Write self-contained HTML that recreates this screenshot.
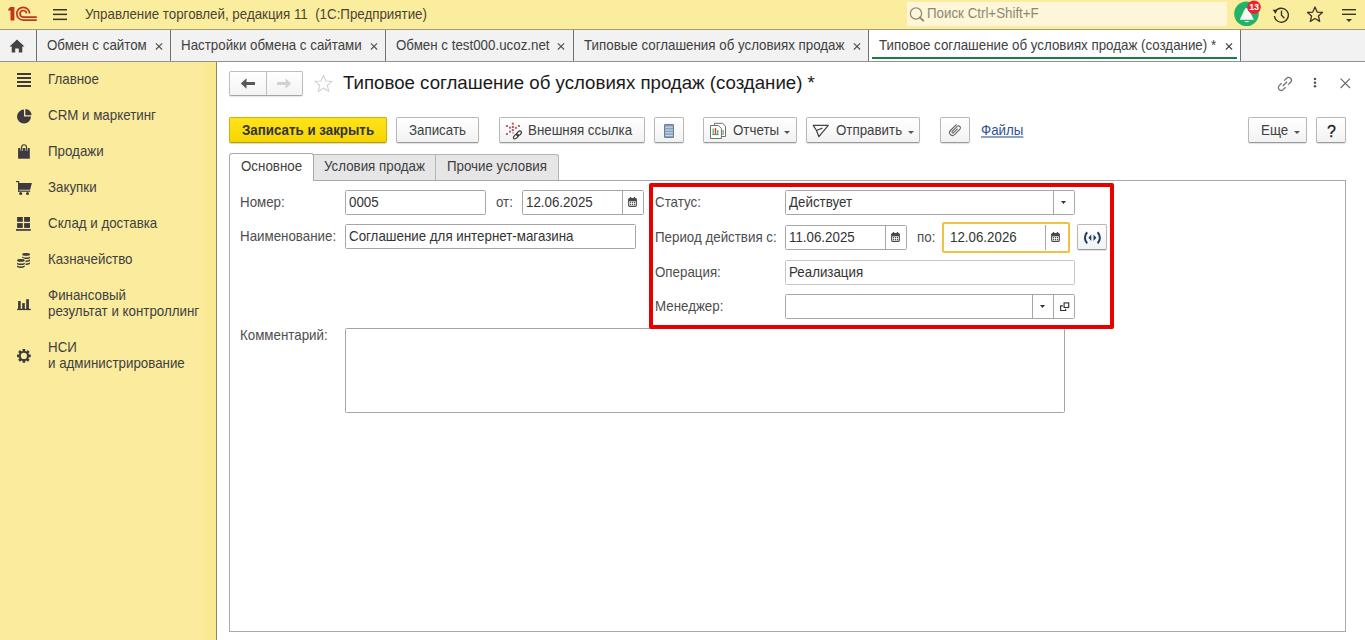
<!DOCTYPE html>
<html><head><meta charset="utf-8">
<style>
*{box-sizing:border-box;margin:0;padding:0}
html,body{width:1365px;height:640px;overflow:hidden;background:#fff;font-family:"Liberation Sans",sans-serif;font-size:13.33px;color:#4d4d4d}
.a{position:absolute}
.t{position:absolute;white-space:pre;line-height:15px;font-size:13.33px;transform:scaleY(1.08);transform-origin:0 7.4px}
svg{position:absolute;overflow:visible}
#hdr{position:absolute;left:0;top:0;width:1365px;height:29px;background:#fbed9e}
#tabs{position:absolute;left:0;top:29px;width:1365px;height:33px;background:#f2f2f2;border-top:1px solid #a29c7c;border-bottom:1px solid #939393}
.tab{position:absolute;top:0;height:31px;border-left:1px solid #707070}
#side{position:absolute;left:0;top:62px;width:217px;height:578px;background:linear-gradient(to right,#faeb9d 0,#faeb9d 198px,#fbe990 212px,#fbe98e 216px);border-right:1px solid #8d8866}
.si{position:absolute;left:48px;color:#404040;font-size:13.33px;line-height:14.8px;white-space:nowrap;transform:scaleY(1.08);transform-origin:0 7.3px;margin-top:2px}
.btn{position:absolute;top:117px;height:26px;border:1px solid #b8b8b8;border-bottom-color:#9a9a9a;border-radius:2px;background:linear-gradient(#fff,#f2f2f2);box-shadow:0 1px 1px rgba(0,0,0,.12)}
.inp{position:absolute;height:25px;border:1px solid #a6a6a6;border-radius:1.5px;background:#fff}
.lbl{position:absolute;white-space:pre;line-height:15px;color:#4d4d4d;transform:scaleY(1.08);transform-origin:0 7.4px}
.val{position:absolute;white-space:pre;line-height:15px;color:#333;transform:scaleY(1.08);transform-origin:0 7.4px}
.sep{position:absolute;top:0;bottom:0;width:1px;background:#a6a6a6}
</style></head>
<body>
<!-- header -->
<div id="hdr">
  <svg style="left:0;top:0" width="40" height="29" viewBox="0 0 40 29">
    <g fill="none" stroke="#c4361c" stroke-width="1.7">
      <path d="M29.6 13.6 A6.4 6.4 0 1 0 23.2 20.1 H36.8"/>
      <path d="M26.6 13.4 A3.3 3.3 0 1 0 23.2 17.1 H36.8"/>
    </g>
    <path d="M8.2 9.2 L10.3 7.1 H14.4 V20.6 H10.5 V10.6 H8.2 Z" fill="#c4361c"/>
  </svg>
  <svg style="left:53px;top:8px" width="15" height="13">
    <g fill="#3b3523"><rect x="0" y="1" width="14" height="1.5"/><rect x="0" y="5.6" width="14" height="1.5"/><rect x="0" y="10.6" width="14" height="1.5"/></g>
  </svg>
  <div class="t" style="left:85px;top:7px;color:#4a4433">Управление торговлей, редакция 11  (1С:Предприятие)</div>
  <div class="a" style="left:907px;top:2px;width:320px;height:24px;background:#fdf6d8"></div>
  <svg style="left:907px;top:4px" width="20" height="20">
    <circle cx="9" cy="9.5" r="5.6" fill="none" stroke="#8f8a70" stroke-width="1.3"/>
    <path d="M13 13.5 L16.2 16.6" stroke="#8f8a70" stroke-width="2" stroke-linecap="round"/>
  </svg>
  <div class="t" style="left:927px;top:6px;color:#8d8970">Поиск Ctrl+Shift+F</div>
  <!-- bell -->
  <svg style="left:1234px;top:1px" width="26" height="26">
    <circle cx="12.5" cy="12.8" r="12.3" fill="#21b36a"/>
    <path d="M5.8 18.8 L10 9.5 Q12.6 4.6 15.2 9.5 L19.9 18.8 Z" fill="#f4fbf6"/>
    <path d="M10.4 19.9 H15.2 Q12.8 22.4 10.4 19.9 Z" fill="#f4fbf6"/>
  </svg>
  <svg style="left:1245px;top:-1px" width="18" height="16">
    <circle cx="9" cy="8.2" r="6.8" fill="#e8232f"/>
  </svg>
  <div class="a" style="left:1245px;top:1px;width:18px;text-align:center;font-size:9px;font-weight:bold;color:#fff;line-height:12px;letter-spacing:-0.2px">13</div>
  <!-- history -->
  <svg style="left:1272px;top:6px" width="18" height="17">
    <path d="M3.4 5.5 A7 7 0 1 1 2.4 10" fill="none" stroke="#3b3523" stroke-width="1.4"/>
    <path d="M0.6 3.8 L5.4 3.5 L3.6 8 Z" fill="#3b3523"/>
    <path d="M9.5 4.5 V9.2 L12.4 12.3" fill="none" stroke="#3b3523" stroke-width="1.4"/>
  </svg>
  <!-- star -->
  <svg style="left:1306px;top:6px" width="18" height="17">
    <path d="M9 1 L11.2 6.1 L16.5 6.5 L12.4 10 L13.7 15.4 L9 12.5 L4.3 15.4 L5.6 10 L1.5 6.5 L6.8 6.1 Z" fill="none" stroke="#3b3523" stroke-width="1.3" stroke-linejoin="round"/>
  </svg>
  <!-- menu -->
  <svg style="left:1342px;top:8px" width="16" height="16">
    <rect x="0" y="1" width="14" height="1.4" fill="#3b3523"/>
    <rect x="0" y="5.6" width="14" height="1.4" fill="#3b3523"/>
    <path d="M4 11 H10 L7 14 Z" fill="#3b3523"/>
  </svg>
</div>

<!-- open windows tabs -->
<div id="tabs">
  <svg style="left:9px;top:9px" width="16" height="14">
    <path d="M8 0.5 L15.5 7.5 H13.3 V13.5 H9.8 V9.5 H6.2 V13.5 H2.7 V7.5 H0.5 Z" fill="#444"/>
  </svg>
  <div class="tab" style="left:36px;width:134px">
    <div class="t" style="left:10px;top:8px;color:#404040">Обмен с сайтом</div>
    <svg style="left:118px;top:13px" width="8" height="8"><path d="M0.9 0.3 L7.1 6.5 M7.1 0.3 L0.9 6.5" stroke="#555" stroke-width="1.15"/></svg>
  </div>
  <div class="tab" style="left:170px;width:215px">
    <div class="t" style="left:10px;top:8px;color:#404040">Настройки обмена с сайтами</div>
    <svg style="left:199px;top:13px" width="8" height="8"><path d="M0.9 0.3 L7.1 6.5 M7.1 0.3 L0.9 6.5" stroke="#555" stroke-width="1.15"/></svg>
  </div>
  <div class="tab" style="left:385px;width:188px">
    <div class="t" style="left:10px;top:8px;color:#404040">Обмен с test000.ucoz.net</div>
    <svg style="left:171px;top:13px" width="8" height="8"><path d="M0.9 0.3 L7.1 6.5 M7.1 0.3 L0.9 6.5" stroke="#555" stroke-width="1.15"/></svg>
  </div>
  <div class="tab" style="left:573px;width:295px">
    <div class="t" style="left:10px;top:8px;color:#404040">Типовые соглашения об условиях продаж</div>
    <svg style="left:279px;top:13px" width="8" height="8"><path d="M0.9 0.3 L7.1 6.5 M7.1 0.3 L0.9 6.5" stroke="#555" stroke-width="1.15"/></svg>
  </div>
  <div class="tab" style="left:868px;width:372px;background:#fff">
    <div class="t" style="left:10px;top:8px;color:#404040">Типовое соглашение об условиях продаж (создание) *</div>
    <svg style="left:356px;top:13px" width="8" height="8"><path d="M0.9 0.3 L7.1 6.5 M7.1 0.3 L0.9 6.5" stroke="#444" stroke-width="1.15"/></svg>
    <div class="a" style="left:3px;top:27px;width:365px;height:2px;background:#1e7c48"></div>
  </div>
  <div class="tab" style="left:1240px;width:1px"></div>
</div>

<!-- sidebar -->
<div id="side">
  <svg style="left:17px;top:11px" width="14" height="14"><g fill="#3c3940"><rect y="0" width="14" height="2"/><rect y="4" width="14" height="2"/><rect y="8" width="14" height="2"/><rect y="12" width="14" height="2"/></g></svg>
  <div class="si" style="top:9px">Главное</div>
  <svg style="left:17px;top:46px" width="15" height="15">
    <path d="M7 8.6 V1.6 A7 7 0 1 0 14 8.6 Z" fill="#3c3940"/>
    <path d="M8.3 7.2 V1 A6.2 6.2 0 0 1 14.5 7.2 Z" fill="#3c3940"/>
  </svg>
  <div class="si" style="top:45px">CRM и маркетинг</div>
  <svg style="left:17px;top:81px" width="14" height="17">
    <path d="M1.1 5.1 H12.8 V15.7 H1.1 Z" fill="#3c3940"/>
    <rect x="3.5" y="5" width="2.3" height="2.8" fill="#faeb9d"/><rect x="8.3" y="5" width="2.3" height="2.8" fill="#faeb9d"/>
    <path d="M4.65 7.8 V4.1 A2.4 2.4 0 0 1 9.45 4.1 V7.8" fill="none" stroke="#3c3940" stroke-width="1.15"/>
  </svg>
  <div class="si" style="top:81px">Продажи</div>
  <svg style="left:16px;top:119px" width="17" height="16">
    <g fill="#3c3940">
      <rect x="0" y="0" width="2.9" height="1.2"/>
      <rect x="2.1" y="0" width="1.1" height="10.6"/>
      <path d="M2.1 2 H15.9 L14.1 8.7 H2.1 Z"/>
      <rect x="2.1" y="9.6" width="12.1" height="1.2"/>
      <circle cx="4.7" cy="12.4" r="1.5"/><circle cx="11.5" cy="12.4" r="1.5"/>
    </g>
  </svg>
  <div class="si" style="top:117px">Закупки</div>
  <svg style="left:16px;top:155px" width="16" height="15">
    <g fill="#3c3940"><rect x="1.1" y="0" width="5.7" height="4.8"/><rect x="8.1" y="0" width="5.9" height="4.8"/><rect x="1.1" y="6.1" width="5.7" height="4.8"/><rect x="8.1" y="6.1" width="5.9" height="4.8"/><rect x="0" y="12.1" width="14.8" height="1.7"/></g>
  </svg>
  <div class="si" style="top:153px">Склад и доставка</div>
  <svg style="left:16px;top:189px" width="16" height="18">
    <ellipse cx="10.1" cy="3.4" rx="3.9" ry="1.4" fill="#3c3940"/><path d="M6.199999999999999 5.20 A3.9 1.4 0 0 0 14.0 5.20 V6.70 A3.9 1.4 0 0 1 6.199999999999999 6.70 Z" fill="#3c3940"/><path d="M6.199999999999999 8.10 A3.9 1.4 0 0 0 14.0 8.10 V9.60 A3.9 1.4 0 0 1 6.199999999999999 9.60 Z" fill="#3c3940"/><path d="M6.199999999999999 11.00 A3.9 1.4 0 0 0 14.0 11.00 V12.50 A3.9 1.4 0 0 1 6.199999999999999 12.50 Z" fill="#3c3940"/>
    <path d="M0.3 9.3 A4.6 2.2 0 0 1 9.5 9.3 V16.6 H0.3 Z" fill="#faeb9d"/>
    <ellipse cx="4.9" cy="9.4" rx="3.8" ry="1.4" fill="#3c3940"/><path d="M1.1000000000000005 11.20 A3.8 1.4 0 0 0 8.7 11.20 V12.70 A3.8 1.4 0 0 1 1.1000000000000005 12.70 Z" fill="#3c3940"/><path d="M1.1000000000000005 14.10 A3.8 1.4 0 0 0 8.7 14.10 V15.60 A3.8 1.4 0 0 1 1.1000000000000005 15.60 Z" fill="#3c3940"/>
  </svg>
  <div class="si" style="top:189px">Казначейство</div>
  <svg style="left:17px;top:237px" width="15" height="13">
    <g fill="#3c3940"><rect x="1.1" y="2" width="2.6" height="8.5"/><rect x="5.2" y="4.1" width="2.6" height="6.4"/><rect x="9.2" y="0.2" width="2.7" height="10.3"/><rect x="0.1" y="9.8" width="13.7" height="1.3"/></g>
  </svg>
  <div class="si" style="top:225px">Финансовый<br>результат и контроллинг</div>
  <svg style="left:17px;top:287px" width="14" height="14">
    <path fill="#3c3940" fill-rule="evenodd" transform="translate(6.9 6.9)" d="M-1.35 -5.02 L-1.34 -6.87 L1.34 -6.87 L1.35 -5.02 L2.60 -4.50 L3.91 -5.80 L5.80 -3.91 L4.50 -2.60 L5.02 -1.35 L6.87 -1.34 L6.87 1.34 L5.02 1.35 L4.50 2.60 L5.80 3.91 L3.91 5.80 L2.60 4.50 L1.35 5.02 L1.34 6.87 L-1.34 6.87 L-1.35 5.02 L-2.60 4.50 L-3.91 5.80 L-5.80 3.91 L-4.50 2.60 L-5.02 1.35 L-6.87 1.34 L-6.87 -1.34 L-5.02 -1.35 L-4.50 -2.60 L-5.80 -3.91 L-3.91 -5.80 L-2.60 -4.50 Z M0 -3.1 A3.1 3.1 0 1 0 0 3.1 A3.1 3.1 0 1 0 0 -3.1 Z"/>
  </svg>
  <div class="si" style="top:277px">НСИ<br>и администрирование</div>
</div>

<!-- content -->
<div id="content">
  <!-- nav buttons -->
  <div class="a" style="left:229px;top:71px;width:74px;height:25px;border:1px solid #bdbdbd;border-bottom-color:#a5a5a5;border-radius:2px;background:linear-gradient(#fff,#f3f3f3);box-shadow:0 1px 1px rgba(0,0,0,.1)"></div>
  <div class="a" style="left:266px;top:72px;width:1px;height:23px;background:#bdbdbd"></div>
  <svg style="left:240px;top:78px" width="16" height="12"><path d="M0.8 5.5 L6.5 0.3 V4 H15 V7 H6.5 V10.7 Z" fill="#585858"/></svg>
  <svg style="left:276px;top:78px" width="16" height="12"><path d="M15.2 5.5 L9.5 0.3 V4 H1 V7 H9.5 V10.7 Z" fill="#d2d2d2"/></svg>
  <svg style="left:314px;top:74px" width="20" height="20"><path d="M9.5 1.2 L11.9 7 L18 7.4 L13.3 11.3 L14.8 17.4 L9.5 14.1 L4.2 17.4 L5.7 11.3 L1 7.4 L7.1 7 Z" fill="none" stroke="#d4d4d4" stroke-width="1.2" stroke-linejoin="round"/></svg>
  <div class="a" style="left:343px;top:72px;font-size:18.67px;line-height:21px;color:#1a1a1a;white-space:pre">Типовое соглашение об условиях продаж (создание) *</div>
  <!-- top right icons -->
  <svg style="left:1276.6px;top:75.6px" width="17" height="17">
    <g fill="none" stroke="#747474" stroke-width="1.3">
      <path d="M7.2 4.6 L9.6 2.2 A2.6 2.6 0 0 1 13.6 6.2 L11.2 8.6"/>
      <path d="M8.6 11.2 L6.2 13.6 A2.6 2.6 0 0 1 2.2 9.6 L4.6 7.2"/>
      <path d="M5.8 10 L10 5.8"/>
    </g>
  </svg>
  <svg style="left:1313px;top:77px" width="4" height="12"><g fill="#555"><circle cx="2" cy="2.1" r="1.25"/><circle cx="2" cy="5.7" r="1.25"/><circle cx="2" cy="9.3" r="1.25"/></g></svg>
  <svg style="left:1340px;top:78px" width="11" height="11"><path d="M0.6 0.6 L10 10 M10 0.6 L0.6 10" stroke="#666" stroke-width="1.1"/></svg>

  <!-- toolbar -->
  <div class="a" style="left:229px;top:117px;width:158px;height:26px;border:1px solid #d4b300;border-bottom-color:#b89c00;border-radius:2px;background:linear-gradient(#ffe41c,#f6d500);box-shadow:0 1px 1px rgba(0,0,0,.15)"></div>
  <div class="t" style="left:242px;top:123px;font-weight:bold;color:#333">Записать и закрыть</div>
  <div class="btn" style="left:396px;width:83px"></div>
  <div class="t" style="left:409px;top:123px;color:#404040">Записать</div>
  <div class="btn" style="left:499px;width:146px"></div>
  <svg style="left:495px;top:115px" width="30" height="30">
    <rect x="10.95" y="10.02" width="2" height="2" fill="#a86a6a"/><rect x="16.82" y="7.67" width="2" height="2" fill="#b05a5a"/><rect x="22.91" y="10.02" width="2" height="2" fill="#a86a6a"/><rect x="14.00" y="11.66" width="2" height="2" fill="#a86a6a"/><rect x="16.82" y="10.95" width="2" height="2" fill="#c04848"/><rect x="19.86" y="11.89" width="2" height="2" fill="#a86a6a"/><rect x="16.82" y="14.00" width="2" height="2" fill="#b05a5a"/><rect x="14.00" y="15.64" width="2" height="2" fill="#a86a6a"/><rect x="10.95" y="17.99" width="2" height="2" fill="#a86a6a"/><rect x="17.05" y="16.82" width="2" height="2" fill="#d8b0a8"/>
    <g fill="none" stroke="#3a3a3a" stroke-width="1.15">
      <ellipse cx="24" cy="18.4" rx="2.9" ry="1.7" transform="rotate(-45 24 18.4)"/>
      <ellipse cx="20.9" cy="21.5" rx="2.9" ry="1.7" transform="rotate(-45 20.9 21.5)"/>
    </g>
  </svg>
  <div class="t" style="left:528px;top:123px;color:#404040">Внешняя ссылка</div>
  <div class="btn" style="left:654px;width:30px"></div>
  <svg style="left:664px;top:124px" width="11" height="15">
    <rect x="0.5" y="0.5" width="9" height="13" rx="0.5" fill="#87a2bd" stroke="#687e97"/>
    <g stroke="#d8e3ee" stroke-width="0.9"><path d="M1.2 3.2 H8.8 M1.2 6 H8.8 M1.2 8.8 H8.8 M1.2 11.4 H8.8"/></g>
  </svg>
  <div class="btn" style="left:703px;width:94px"></div>
  <svg style="left:709px;top:122px" width="18" height="18">
    <path d="M5.5 1.3 H13.6 L16.5 4.2 V14.5 H5.5 Z" fill="#fff" stroke="#6f6f6f" stroke-width="1"/>
    <path d="M1.5 3.5 H9.4 L12.4 6.5 V16.5 H1.5 Z" fill="#fff" stroke="#6f6f6f" stroke-width="1"/>
    <rect x="13.5" y="8" width="1.1" height="5" fill="#4c9a4c"/>
    <rect x="3.6" y="6.5" width="1.1" height="6.5" fill="#4c9a4c"/><rect x="5.8" y="6" width="1.4" height="7" fill="#d6403a"/><rect x="8.2" y="8" width="1.1" height="5" fill="#4c9a4c"/><rect x="3.6" y="12.2" width="6" height="0.9" fill="#4c9a4c"/>
  </svg>
  <div class="t" style="left:733px;top:123px;color:#404040">Отчеты</div>
  <svg style="left:784px;top:131px" width="7" height="4"><path d="M0 0 H6 L3 3 Z" fill="#555"/></svg>
  <div class="btn" style="left:806px;width:114px"></div>
  <svg style="left:806px;top:118px" width="26" height="22">
    <path d="M7.2 7.4 H22.3 L12.9 18.7 L10.5 12.5 Z M10.5 12.5 L16.4 10.2" fill="none" stroke="#444" stroke-width="1.25" stroke-linejoin="round"/>
  </svg>
  <div class="t" style="left:836px;top:123px;color:#404040">Отправить</div>
  <svg style="left:908px;top:131px" width="7" height="4"><path d="M0 0 H6 L3 3 Z" fill="#555"/></svg>
  <div class="btn" style="left:940px;width:30px"></div>
  <svg style="left:938px;top:115px" width="26" height="26">
    <path d="M18.6 9.3 L12.4 15.5 A2.9 2.9 0 0 0 16.5 19.6 L22 14.1 A2 2 0 0 0 19.2 11.3 L14.2 16.3 A1 1 0 0 0 15.6 17.7 L19.6 13.7" fill="none" stroke="#666" stroke-width="1.1"/>
  </svg>
  <div class="t" style="left:981px;top:123px;color:#2f5190;text-decoration:underline">Файлы</div>
  <div class="btn" style="left:1248px;width:59px"></div>
  <div class="t" style="left:1261px;top:123px;color:#404040">Еще</div>
  <svg style="left:1294px;top:131px" width="7" height="4"><path d="M0 0 H6 L3 3 Z" fill="#555"/></svg>
  <div class="btn" style="left:1316px;width:30px"></div>
  <div class="t" style="left:1327px;top:122px;color:#1a1a1a;font-size:16px;line-height:18px;-webkit-text-stroke:0.25px #1a1a1a">?</div>

  <!-- form tabs -->
  <div class="a" style="left:313px;top:154px;width:123px;height:27px;background:#e6e6e6;border:1px solid #b3b3b3;border-bottom:none;border-radius:2px 0 0 0"></div>
  <div class="a" style="left:435px;top:154px;width:124px;height:27px;background:#e6e6e6;border:1px solid #b3b3b3;border-bottom:none;border-radius:0 3px 0 0"></div>
  <div class="t" style="left:324px;top:159px;color:#404040">Условия продаж</div>
  <div class="t" style="left:447px;top:159px;color:#404040">Прочие условия</div>
  <div class="a" style="left:229px;top:180px;width:1117px;height:452px;border:1px solid #a9a9a9;background:#fff"></div>
  <div class="a" style="left:229px;top:153px;width:85px;height:28px;background:#fff;border:1px solid #a9a9a9;border-bottom:none;border-radius:3px 3px 0 0"></div>
  <div class="t" style="left:241px;top:159px;color:#404040">Основное</div>

  <!-- left fields -->
  <div class="lbl" style="left:240px;top:195px">Номер:</div>
  <div class="inp" style="left:345px;top:190px;width:141px"></div>
  <div class="val" style="left:349px;top:195px">0005</div>
  <div class="lbl" style="left:496px;top:195px">от:</div>
  <div class="inp" style="left:522px;top:190px;width:122px"><div class="sep" style="left:99px"></div></div>
  <div class="val" style="left:526px;top:195px">12.06.2025</div>
  <svg style="left:628px;top:197px" width="10" height="11"><rect x="0.65" y="1.65" width="7.7" height="7.7" rx="1" fill="#fff" stroke="#4a4a4a" stroke-width="1.1"/><rect x="0.6" y="1.5" width="7.8" height="2.8" fill="#4a4a4a"/><rect x="1.9" y="0" width="1.3" height="2.4" fill="#4a4a4a"/><rect x="5.8" y="0" width="1.3" height="2.4" fill="#4a4a4a"/><g fill="#4a4a4a"><circle cx="2.5" cy="5.5" r="0.68"/><circle cx="4.5" cy="5.5" r="0.68"/><circle cx="6.5" cy="5.5" r="0.68"/><circle cx="2.5" cy="7.5" r="0.68"/><circle cx="4.5" cy="7.5" r="0.68"/><circle cx="6.5" cy="7.5" r="0.68"/></g></svg>
  <div class="lbl" style="left:240px;top:229px">Наименование:</div>
  <div class="inp" style="left:345px;top:224px;width:291px"></div>
  <div class="val" style="left:349px;top:229px">Соглашение для интернет-магазина</div>
  <div class="lbl" style="left:240px;top:328px">Комментарий:</div>
  <div class="inp" style="left:345px;top:328px;width:720px;height:85px"></div>

  <!-- red box -->
  <div class="a" style="left:649px;top:183px;width:465px;height:146px;border:4px solid #e60000;border-radius:2px"></div>
  <div class="lbl" style="left:655px;top:195px">Статус:</div>
  <div class="inp" style="left:785px;top:190px;width:290px"><div class="sep" style="left:267px"></div></div>
  <div class="val" style="left:789px;top:195px">Действует</div>
  <svg style="left:1061px;top:201px" width="6" height="4"><path d="M0 0 H5 L2.5 3 Z" fill="#333"/></svg>
  <div class="lbl" style="left:655px;top:230px">Период действия с:</div>
  <div class="inp" style="left:785px;top:225px;width:122px"><div class="sep" style="left:99px"></div></div>
  <div class="val" style="left:789px;top:230px">11.06.2025</div>
  <svg style="left:891px;top:232px" width="10" height="11"><rect x="0.65" y="1.65" width="7.7" height="7.7" rx="1" fill="#fff" stroke="#4a4a4a" stroke-width="1.1"/><rect x="0.6" y="1.5" width="7.8" height="2.8" fill="#4a4a4a"/><rect x="1.9" y="0" width="1.3" height="2.4" fill="#4a4a4a"/><rect x="5.8" y="0" width="1.3" height="2.4" fill="#4a4a4a"/><g fill="#4a4a4a"><circle cx="2.5" cy="5.5" r="0.68"/><circle cx="4.5" cy="5.5" r="0.68"/><circle cx="6.5" cy="5.5" r="0.68"/><circle cx="2.5" cy="7.5" r="0.68"/><circle cx="4.5" cy="7.5" r="0.68"/><circle cx="6.5" cy="7.5" r="0.68"/></g></svg>
  <div class="lbl" style="left:917px;top:230px">по:</div>
  <div class="a" style="left:942px;top:222px;width:128px;height:31px;border:2px solid #efc33e;border-radius:2px;background:#fff"><div class="sep" style="left:101px;top:1px;bottom:1px;background:#a6a6a6"></div></div>
  <div class="val" style="left:950px;top:230px">12.06.2026</div>
  <svg style="left:1051px;top:232px" width="10" height="11"><rect x="0.65" y="1.65" width="7.7" height="7.7" rx="1" fill="#fff" stroke="#4a4a4a" stroke-width="1.1"/><rect x="0.6" y="1.5" width="7.8" height="2.8" fill="#4a4a4a"/><rect x="1.9" y="0" width="1.3" height="2.4" fill="#4a4a4a"/><rect x="5.8" y="0" width="1.3" height="2.4" fill="#4a4a4a"/><g fill="#4a4a4a"><circle cx="2.5" cy="5.5" r="0.68"/><circle cx="4.5" cy="5.5" r="0.68"/><circle cx="6.5" cy="5.5" r="0.68"/><circle cx="2.5" cy="7.5" r="0.68"/><circle cx="4.5" cy="7.5" r="0.68"/><circle cx="6.5" cy="7.5" r="0.68"/></g></svg>
  <div class="btn" style="left:1077px;top:224px;width:30px;height:26px"></div>
  <svg style="left:1083px;top:231px" width="19" height="14">
    <g fill="none" stroke="#1c3e5e" stroke-width="2"><path d="M4.2 1.2 A8 8 0 0 0 4.2 12.4"/><path d="M14.6 1.2 A8 8 0 0 1 14.6 12.4"/></g>
    <path d="M8.3 3.6 L5.4 6.8 L8.3 10 Z M10.5 3.6 L13.4 6.8 L10.5 10 Z" fill="#1c3e5e"/>
  </svg>
  <div class="lbl" style="left:655px;top:265px">Операция:</div>
  <div class="inp" style="left:785px;top:260px;width:290px;height:25px;border-color:#c6c6c6"></div>
  <div class="val" style="left:789px;top:265px">Реализация</div>
  <div class="lbl" style="left:655px;top:299px">Менеджер:</div>
  <div class="inp" style="left:785px;top:294px;width:290px;height:25px"><div class="sep" style="left:246px"></div><div class="sep" style="left:267px"></div></div>
  <svg style="left:1040px;top:305px" width="6" height="4"><path d="M0 0 H5 L2.5 3 Z" fill="#333"/></svg>
  <svg style="left:1058px;top:300px" width="12" height="12"><rect x="6.1" y="2.9" width="4.6" height="4.6" fill="none" stroke="#333" stroke-width="1.15"/><path d="M4.9 5.9 H2.6 V10.5 H7.7 V9" fill="none" stroke="#333" stroke-width="1.15"/></svg>
</div>
</body></html>
